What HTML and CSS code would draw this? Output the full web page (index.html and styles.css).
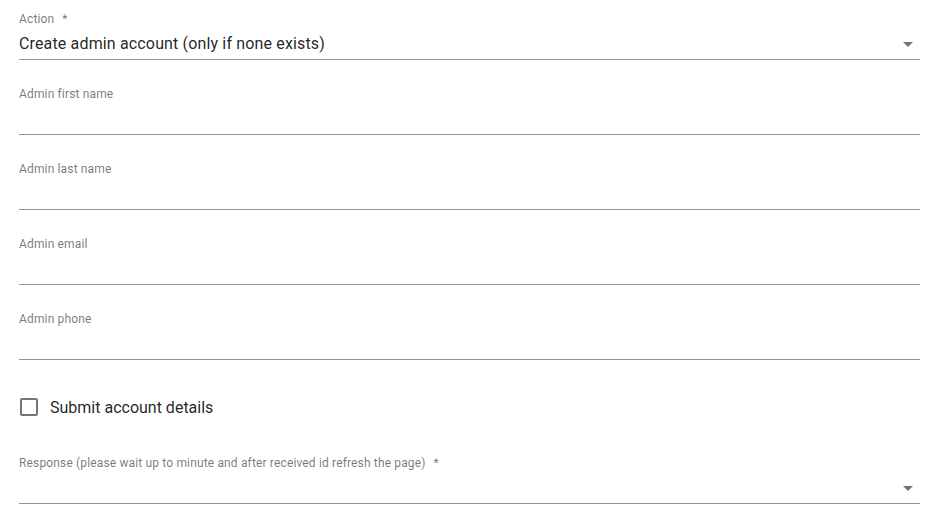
FILE: index.html
```html
<!DOCTYPE html>
<html lang="en">
<head>
    <meta charset="UTF-8">
    <meta name="viewport" content="width=device-width, initial-scale=1.0">
    <title>Admin Account</title>
    <link rel="stylesheet" href="styles.css">
</head>
<body>
    <form class="container">
        <div class="field">
            <label class="field-label">Action<span class="req">*</span></label>
            <div class="field-input select">
                <span class="value">Create admin account (only if none exists)</span>
                <svg class="arrow" width="10" height="5" viewBox="7 10 10 5"><path d="M7 10l5 5 5-5z"/></svg>
            </div>
        </div>

        <div class="field">
            <label class="field-label" for="first-name">Admin first name</label>
            <input class="field-input" type="text" id="first-name">
        </div>

        <div class="field">
            <label class="field-label" for="last-name">Admin last name</label>
            <input class="field-input" type="text" id="last-name">
        </div>

        <div class="field">
            <label class="field-label" for="email">Admin email</label>
            <input class="field-input" type="email" id="email">
        </div>

        <div class="field">
            <label class="field-label" for="phone">Admin phone</label>
            <input class="field-input" type="tel" id="phone">
        </div>

        <label class="check-row">
            <svg class="check-icon" width="24" height="24" viewBox="0 0 24 24"><path d="M19 5v14H5V5h14m0-2H5c-1.11 0-2 .9-2 2v14c0 1.1.89 2 2 2h14c1.1 0 2-.9 2-2V5c0-1.1-.9-2-2-2z"/></svg>
            <span>Submit account details</span>
        </label>

        <div class="field">
            <label class="field-label">Response (please wait up to minute and after received id refresh the page)<span class="req">*</span></label>
            <div class="field-input select">
                <span class="value"></span>
                <svg class="arrow" width="10" height="5" viewBox="7 10 10 5"><path d="M7 10l5 5 5-5z"/></svg>
            </div>
        </div>
    </form>
</body>
</html>
```

FILE: styles.css
```css
body {
    font-family: Roboto, "Liberation Sans", Arial, sans-serif;
    margin: 0;
    color: rgba(0, 0, 0, 0.87);
    background: #fff;
    letter-spacing: 0.15px;
}
.container {
    width: 901px;
    padding: 12px 0 0 19px;
}
.field {
    margin-bottom: 27px;
}
.field-label {
    display: block;
    font-size: 12px;
    line-height: 14px;
    color: rgba(0, 0, 0, 0.54);
}
.req {
    margin-left: 8px;
}
.field-input {
    display: block;
    box-sizing: border-box;
    width: 100%;
    height: 34px;
    margin: 0;
    padding: 8px 0 6px;
    border: none;
    border-bottom: 1px solid rgba(0, 0, 0, 0.42);
    font-family: inherit;
    font-size: 16px;
    line-height: 19px;
    letter-spacing: inherit;
    color: rgba(0, 0, 0, 0.87);
    background: transparent;
    outline: none;
}
.select {
    display: flex;
    align-items: flex-start;
    justify-content: space-between;
}
.arrow {
    fill: rgba(0, 0, 0, 0.54);
    margin: 8px 7px 0 0;
}
.check-row {
    display: flex;
    align-items: center;
    height: 42px;
    margin: -1px 0 28px -2px;
    font-size: 16px;
    line-height: 19px;
    letter-spacing: 0;
}
.check-icon {
    fill: rgba(0, 0, 0, 0.54);
    margin-right: 9px;
}
```
